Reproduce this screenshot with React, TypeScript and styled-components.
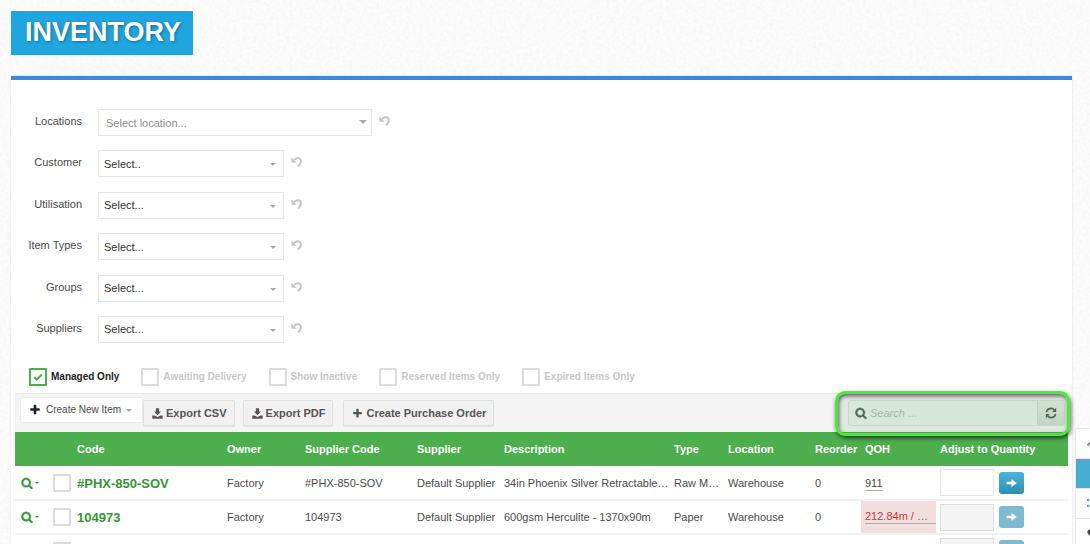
import React from "react";
import styled, { createGlobalStyle, css } from "styled-components";

const GlobalStyle = createGlobalStyle`
  *, *::before, *::after { box-sizing: border-box; }
  body {
    margin: 0;
    font-family: "Liberation Sans", Arial, sans-serif;
    font-size: 11px;
    line-height: 16px;
    color: #4a4a4a;
    background: #fcfcfc;
  }
  button, input, select { font: inherit; color: inherit; margin: 0; }
  button { cursor: pointer; }
`;

const Page = styled.div`
  position: relative;
  height: 100vh;
  overflow: hidden;
  padding: 11px 18px 0 11px;
`;

const Grain = styled.svg`
  position: absolute;
  inset: 0;
  width: 100%;
  height: 100%;
  z-index: -1;
`;

const Title = styled.h1`
  display: inline-block;
  margin: 0 0 21px;
  padding: 0 12px 0 14px;
  height: 44px;
  line-height: 43px;
  vertical-align: top;
  font-size: 27px;
  font-weight: bold;
  color: #fff;
  background: #1fa5e0;
  text-shadow: 1px 1px 3px rgba(0, 0, 0, 0.35);
`;

const Panel = styled.main`
  border-top: 4px solid #4385dc;
  background: #fff;
  min-height: 100vh;
  padding: 29px 4px 0;
  box-shadow: 0 0 2px rgba(0, 0, 0, 0.12);
`;

const Filters = styled.form`
  display: grid;
  align-content: space-between;
  min-height: 234px;
`;

const FilterRow = styled.div`
  display: flex;
  align-items: flex-start;
`;

const FilterLabel = styled.label`
  width: 67px;
  margin-right: 16px;
  padding-top: 4px;
  text-align: right;
`;

const SelectBox = styled.div<{ $wide?: boolean }>`
  position: relative;
  width: ${(p) => (p.$wide ? 274 : 186)}px;
  color: ${(p) => (p.$wide ? "#8a8a8a" : "#333")};

  select {
    appearance: none;
    display: block;
    width: 100%;
    height: 27px;
    padding: 0 ${(p) => (p.$wide ? 7 : 5)}px;
    border: 1px solid #e6e6e6;
    border-radius: 0;
    background: #fff;
  }
`;

const Caret = styled.span<{ $size?: number; $color?: string }>`
  display: inline-block;
  border: solid transparent;
  border-width: ${(p) => p.$size ?? 3}px ${(p) => p.$size ?? 3}px 0;
  border-top-color: ${(p) => p.$color ?? "#aaa"};
`;

const SelectCaret = styled(Caret)`
  position: absolute;
  right: ${(p) => (p.$size === 4 ? 5 : 8)}px;
  top: ${(p) => (p.$size === 4 ? 11 : 13)}px;
  pointer-events: none;
`;

const IconButton = styled.button`
  display: flex;
  padding: 0;
  border: 0;
  background: none;
`;

const ResetButton = styled(IconButton)`
  margin: 6px 0 0 7px;
  color: #c6c6c6;
`;

const Checks = styled.div`
  display: flex;
  gap: 22px;
  padding: 25px 14px 7px;
`;

const CheckLabel = styled.label<{ $on?: boolean }>`
  display: flex;
  align-items: center;
  gap: 4px;
  font-size: 10px;
  font-weight: bold;
  white-space: nowrap;
  color: ${(p) => (p.$on ? "#222" : "#c8c8c8")};
`;

const tick = css`
  border-color: #4cae4c;
  background: no-repeat center / 12px 12px
    url("data:image/svg+xml,%3Csvg xmlns='http://www.w3.org/2000/svg' viewBox='0 0 10 10'%3E%3Cpath d='M1.8 5 4 7.1 8.2 3' fill='none' stroke='%234cae4c' stroke-width='1.7'/%3E%3C/svg%3E");
`;

const Check = styled.input.attrs({ type: "checkbox" })`
  appearance: none;
  flex: none;
  display: block;
  width: 18px;
  height: 18px;
  border: 2px solid #dcdcdc;
  border-radius: 1px;
  background: #fff;
  &:checked { ${tick} }
`;

const Toolbar = styled.div`
  display: flex;
  align-items: flex-start;
  height: 39px;
  padding: 3px 5px 0;
  border-top: 1px solid #e8e8e8;
  background: #f4f4f4;
`;

const NewItemButton = styled.button`
  display: flex;
  align-items: center;
  gap: 5px;
  height: 26px;
  padding: 0 10px 0 8px;
  border: 1px solid #ebebeb;
  border-radius: 2px;
  background: #fff;
  font-size: 10px;
  white-space: nowrap;
  svg { color: #222; }
`;

const ToolButton = styled.button<{ $gap?: number }>`
  display: flex;
  align-items: center;
  gap: 3px;
  height: 26px;
  margin: 3px 0 0 ${(p) => p.$gap ?? 8}px;
  padding: 0 7px 0 8px;
  border: 1px solid #e0e0e0;
  border-radius: 2px;
  background: #f1f1f1;
  box-shadow: 0 1px 1px rgba(0, 0, 0, 0.08);
  font-weight: bold;
  white-space: nowrap;
  color: #555;
`;

const SearchGroup = styled.div`
  position: relative;
  display: flex;
  align-items: center;
  width: 217px;
  height: 26px;
  margin: 3px -2px 0 auto;
  padding-left: 6px;
  border: 1px solid #d3e2d5;
  border-radius: 3px;
  background: #e8f5ea;
  color: #3f5641;

  &::before {
    content: "";
    position: absolute;
    inset: -10px -6px -11px -14px;
    border: 3px solid #4cea38;
    border-radius: 10px;
    background: rgba(150, 180, 150, 0.2);
    box-shadow: 1px 2px 4px rgba(0, 0, 0, 0.65), inset 1px 2px 4px rgba(0, 0, 0, 0.6);
    pointer-events: none;
  }
`;

const SearchInput = styled.input`
  flex: 1;
  min-width: 0;
  height: 24px;
  padding: 0 3px;
  border: 0;
  background: none;
  font-style: italic;
  &::placeholder { color: #a3b9a5; opacity: 1; }
`;

const RefreshButton = styled.button`
  display: flex;
  align-items: center;
  justify-content: center;
  width: 27px;
  height: 24px;
  padding: 0;
  border: 0;
  border-left: 1px solid #c8d6ca;
  background: linear-gradient(#e0ece1, #cfdcd0);
`;

const Table = styled.table`
  width: 100%;
  table-layout: fixed;
  border-collapse: collapse;

  th, td {
    padding: 0 0 0 4px;
    text-align: left;
    white-space: nowrap;
  }
  th {
    height: 34px;
    color: #fff;
    background: #4cae4c;
  }
  td {
    height: 34px;
    border-bottom: 2px solid #f2f2f2;
  }
`;

const RowTools = styled.div`
  display: flex;
  align-items: center;
  padding-left: 2px;
`;

const MenuButton = styled(IconButton)`
  align-items: center;
  gap: 2px;
  width: 32px;
  color: #379637;
`;

const CodeLink = styled.a`
  display: block;
  padding-top: 2px;
  font-size: 13px;
  font-weight: bold;
  color: #379637;
  text-decoration: none;
`;

const QtyCell = styled.td<{ $low?: boolean }>`
  && {
    ${(p) => p.$low && "color: #c23b3b; background: #f2dede;"}
  }
`;

const Qty = styled.span<{ $low?: boolean }>`
  display: ${(p) => (p.$low ? "block" : "inline-block")};
  line-height: 13px;
  border-bottom: 1px solid #aaa;
`;

const Adjust = styled.div`
  display: flex;
  align-items: center;
  gap: 5px;
`;

const AdjustInput = styled.input`
  width: 54px;
  height: 27px;
  border: 1px solid #e6e6e6;
  background: #fff;
  &:disabled { border-color: #ddd; background: #f4f4f4; }
`;

const GoButton = styled.button`
  display: flex;
  align-items: center;
  justify-content: center;
  width: 25px;
  height: 22px;
  padding: 0;
  border: 0;
  border-radius: 3px;
  color: #fff;
  background: linear-gradient(#4cb4d8, #2d8fb3);
  &:disabled { background: #7db9cf; }
`;

const SideMenu = styled.aside`
  position: absolute;
  right: 0;
  top: 428px;
  width: 15px;
  background: #fff;
  border: solid #e8e8e8;
  border-width: 1px 0 0 1px;
  overflow: hidden;
`;

const SideItem = styled.a<{ $active?: boolean; $color?: string }>`
  display: flex;
  align-items: center;
  height: 30px;
  padding-left: 11px;
  border-bottom: 1px solid #e8e8e8;
  color: ${(p) => p.$color ?? "#444"};
  background: ${(p) => (p.$active ? "#48aecf" : "#fff")};
  svg { flex: none; }
`;

type IconProps = { size?: number };

const faIcon = (d: string, weight = 0) => ({ size = 12 }: IconProps) => (
  <svg width={size} height={size} viewBox="0 0 1792 1792" fill="currentColor" stroke="currentColor" strokeWidth={weight} aria-hidden="true">
    <path d={d} />
  </svg>
);

const PlusIcon = faIcon(
  "M1600 736v192q0 40-28 68t-68 28h-416v416q0 40-28 68t-68 28h-192q-40 0-68-28t-28-68v-416h-416q-40 0-68-28t-28-68v-192q0-40 28-68t68-28h416v-416q0-40 28-68t68-28h192q40 0 68 28t28 68v416h416q40 0 68 28t28 68z"
);
const SearchIcon = faIcon(
  "M1216 832q0-185-131.5-316.5t-316.5-131.5-316.5 131.5-131.5 316.5 131.5 316.5 316.5 131.5 316.5-131.5 131.5-316.5zm512 832q0 52-38 90t-90 38q-54 0-90-38l-343-342q-179 124-399 124-143 0-273.5-55.5t-225-150-150-225-55.5-273.5 55.5-273.5 150-225 225-150 273.5-55.5 273.5 55.5 225 150 150 225 55.5 273.5q0 220-124 399l343 343q37 37 37 90z",
  60
);

const UndoIcon = () => (
  <svg width="12" height="12" viewBox="0 0 12 12" fill="none" stroke="currentColor" aria-hidden="true">
    <path d="M3 4.4C5 2.2 7.6 1.6 9.1 3 10.8 4.8 9.8 7.8 7 10.4" strokeWidth="2.1" />
    <path d="M0.4 1.4V6.8H5.8Z" fill="currentColor" stroke="none" />
  </svg>
);

const DownloadIcon = () => (
  <svg width="11" height="11" viewBox="0 0 11 11" fill="currentColor" aria-hidden="true">
    <path d="M3.9 0.2H7.1V3.6H9L5.5 7.3 2 3.6H3.9Z" />
    <path d="M0.3 7.4H2.6L5.5 8.9 8.4 7.4H10.7V10.8H0.3Z" />
  </svg>
);

const RefreshIcon = () => (
  <svg width="12" height="12" viewBox="0 0 12 12" fill="none" stroke="currentColor" aria-hidden="true">
    <path d="M1.4 5.2A4.6 4.6 0 0 1 9.4 3M10.6 6.8A4.6 4.6 0 0 1 2.6 9" strokeWidth="1.7" />
    <path d="M11.2 0.8V4.9H7.1ZM0.8 11.2V7.1H4.9Z" fill="currentColor" stroke="none" />
  </svg>
);

const ArrowIcon = () => (
  <svg width="11" height="10" viewBox="0 0 11 10" fill="currentColor" aria-hidden="true">
    <path d="M0.5 3.7H5.4V0.9L10.8 5 5.4 9.1V6.3H0.5Z" />
  </svg>
);

const HomeIcon = () => (
  <svg width="12" height="12" viewBox="0 0 12 12" fill="none" stroke="currentColor" strokeWidth="2" aria-hidden="true">
    <path d="M0.5 7.5 6 2 11.5 7.5" />
  </svg>
);

const ListIcon = () => (
  <svg width="12" height="12" viewBox="0 0 12 12" stroke="currentColor" strokeWidth="2" aria-hidden="true">
    <path d="M0 2H2M4 2H12M0 8H2M4 8H12" />
  </svg>
);

const HeartIcon = () => (
  <svg width="12" height="12" viewBox="0 0 12 12" fill="currentColor" aria-hidden="true">
    <path d="M6 11 0.8 5.6C-1 2.6 3.2-0.6 6 3 8.8-0.6 13 2.6 11.2 5.6Z" />
  </svg>
);

const filters = [
  { name: "Locations", value: "Select location...", wide: true },
  { name: "Customer", value: "Select.." },
  { name: "Utilisation", value: "Select..." },
  { name: "Item Types", value: "Select..." },
  { name: "Groups", value: "Select..." },
  { name: "Suppliers", value: "Select..." },
];

const checks = ["Managed Only", "Awaiting Delivery", "Show Inactive", "Reserved Items Only", "Expired Items Only"];

const columns: [string, number?][] = [
  ["", 58], ["Code", 150], ["Owner", 78], ["Supplier Code", 112], ["Supplier", 87],
  ["Description"], ["Type", 54], ["Location", 87], ["Reorder", 50], ["QOH", 75], ["Adjust to Quantity", 132],
];

const rows = [
  { code: "#PHX-850-SOV", desc: "34in Phoenix Silver Retractable…", type: "Raw M…", qty: "911" },
  { code: "104973", desc: "600gsm Herculite - 1370x90m", type: "Paper", qty: "212.84m / …", low: true, locked: true },
  { code: "", desc: "", type: "", qty: "", locked: true },
];

export default function App() {
  return (
    <Page>
      <GlobalStyle />
      <Grain aria-hidden="true">
        <filter id="grain">
          <feTurbulence type="fractalNoise" baseFrequency="0.3" numOctaves="2" seed="4" />
          <feColorMatrix values="0 0 0 0 0.5  0 0 0 0 0.5  0 0 0 0 0.5  0.2 0 0 0 -0.07" />
        </filter>
        <rect width="100%" height="100%" filter="url(#grain)" />
      </Grain>
      <Title>INVENTORY</Title>
      <Panel>
        <Filters>
          {filters.map((f) => (
            <FilterRow key={f.name}>
              <FilterLabel htmlFor={f.name}>{f.name}</FilterLabel>
              <SelectBox $wide={f.wide}>
                <select id={f.name}>
                  <option>{f.value}</option>
                </select>
                <SelectCaret $size={f.wide ? 4 : 3} />
              </SelectBox>
              <ResetButton type="button" aria-label={`Reset ${f.name}`}>
                <UndoIcon />
              </ResetButton>
            </FilterRow>
          ))}
        </Filters>
        <Checks>
          {checks.map((label, i) => (
            <CheckLabel key={label} $on={i === 0}>
              <Check defaultChecked={i === 0} />
              {label}
            </CheckLabel>
          ))}
        </Checks>
        <Toolbar>
          <NewItemButton type="button">
            <PlusIcon />
            Create New Item
            <Caret />
          </NewItemButton>
          <ToolButton type="button" $gap={0}><DownloadIcon />Export CSV</ToolButton>
          <ToolButton type="button"><DownloadIcon />Export PDF</ToolButton>
          <ToolButton type="button" $gap={10}><PlusIcon size={11} />Create Purchase Order</ToolButton>
          <SearchGroup>
            <SearchIcon />
            <SearchInput placeholder="Search ..." aria-label="Search" />
            <RefreshButton type="button" aria-label="Refresh"><RefreshIcon /></RefreshButton>
          </SearchGroup>
        </Toolbar>
        <Table>
          <colgroup>
            {columns.map(([name, width]) => <col key={name} width={width} />)}
          </colgroup>
          <thead>
            <tr>
              {columns.map(([name]) => <th key={name}>{name}</th>)}
            </tr>
          </thead>
          <tbody>
            {rows.map((r, i) => (
              <tr key={i}>
                <td>
                  <RowTools>
                    <MenuButton type="button" aria-label={`Actions for row ${i + 1}`}>
                      <SearchIcon />
                      <Caret $size={2} $color="#379637" />
                    </MenuButton>
                    <Check aria-label={`Choose row ${i + 1}`} />
                  </RowTools>
                </td>
                <td><CodeLink href="#">{r.code}</CodeLink></td>
                <td>{r.code && "Factory"}</td>
                <td>{r.code}</td>
                <td>{r.code && "Default Supplier"}</td>
                <td>{r.desc}</td>
                <td>{r.type}</td>
                <td>{r.code && "Warehouse"}</td>
                <td>{r.code && "0"}</td>
                <QtyCell $low={r.low}>{r.qty && <Qty $low={r.low}>{r.qty}</Qty>}</QtyCell>
                <td>
                  <Adjust>
                    <AdjustInput aria-label={`Quantity for row ${i + 1}`} disabled={r.locked} />
                    <GoButton type="button" aria-label="Apply" disabled={r.locked}><ArrowIcon /></GoButton>
                  </Adjust>
                </td>
              </tr>
            ))}
          </tbody>
        </Table>
      </Panel>
      <SideMenu>
        <SideItem href="#" aria-label="Home" $color="#888"><HomeIcon /></SideItem>
        <SideItem href="#" aria-label="Inventory" $active />
        <SideItem href="#" aria-label="Lists" $color="#3a9fd0"><ListIcon /></SideItem>
        <SideItem href="#" aria-label="Favourites"><HeartIcon /></SideItem>
      </SideMenu>
    </Page>
  );
}
